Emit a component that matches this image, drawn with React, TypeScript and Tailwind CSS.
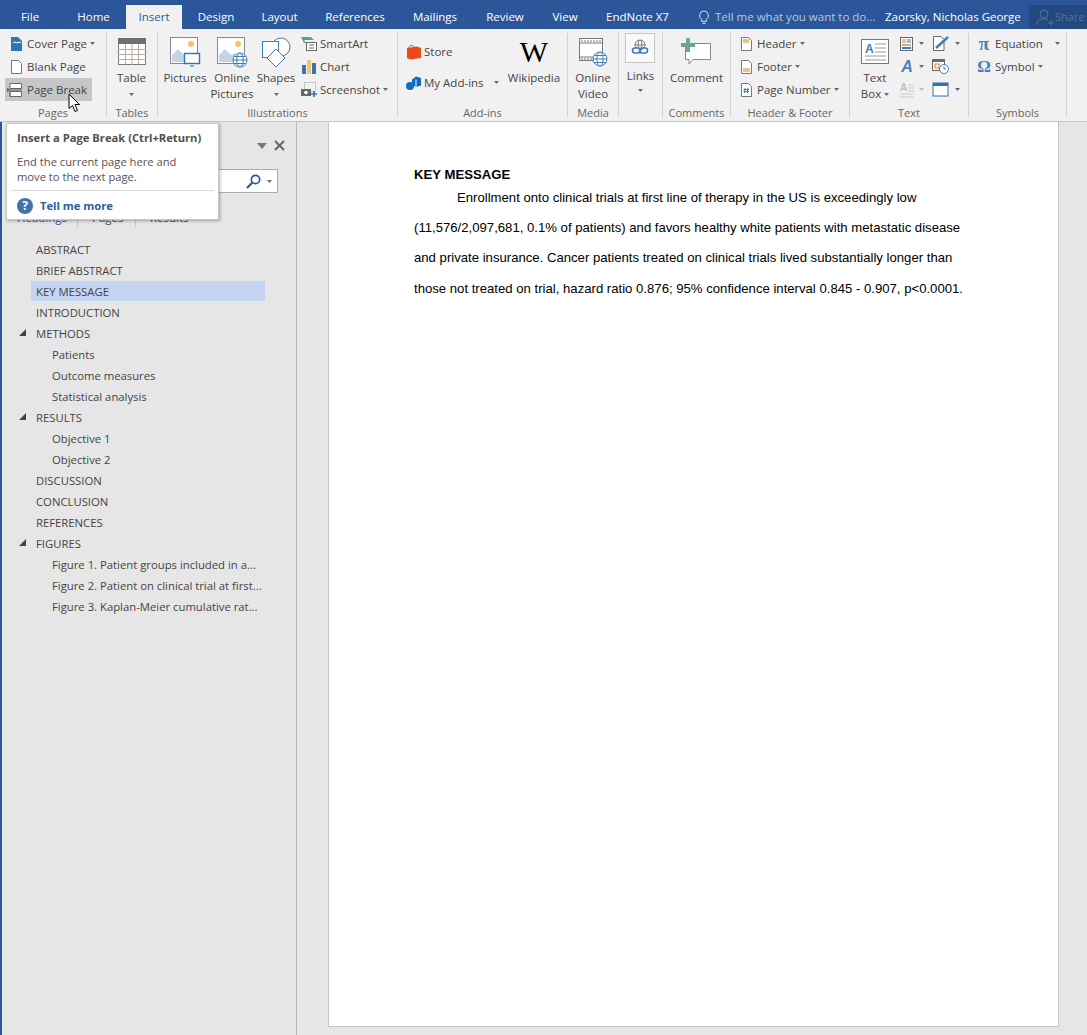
import type { ReactNode } from 'react';

const UI_FONT = "font-['Open_Sans','Noto_Sans',sans-serif]";

const TABS = [
  { label: 'File', className: 'w-[44px] ml-[8px] mr-[12px]' },
  { label: 'Home', className: 'w-[59px]' },
  { label: 'Insert', className: 'w-[56px] ml-[3px] bg-[#f1f1f1] text-[#2b579a]' },
  { label: 'Design', className: 'w-[62px] ml-[3px]' },
  { label: 'Layout', className: 'w-[65px] ml-[0px]' },
  { label: 'References', className: 'w-[86px]' },
  { label: 'Mailings', className: 'w-[74px]' },
  { label: 'Review', className: 'w-[66px]' },
  { label: 'View', className: 'w-[54px]' },
  { label: 'EndNote X7', className: 'w-[91px]' },
];

const TREE = [
  { label: 'ABSTRACT', level: 1 },
  { label: 'BRIEF ABSTRACT', level: 1 },
  { label: 'KEY MESSAGE', level: 1, active: true },
  { label: 'INTRODUCTION', level: 1 },
  { label: 'METHODS', level: 1, open: true },
  { label: 'Patients', level: 2 },
  { label: 'Outcome measures', level: 2 },
  { label: 'Statistical analysis', level: 2 },
  { label: 'RESULTS', level: 1, open: true },
  { label: 'Objective 1', level: 2 },
  { label: 'Objective 2', level: 2 },
  { label: 'DISCUSSION', level: 1 },
  { label: 'CONCLUSION', level: 1 },
  { label: 'REFERENCES', level: 1 },
  { label: 'FIGURES', level: 1, open: true },
  { label: 'Figure 1. Patient groups included in a...', level: 2 },
  { label: 'Figure 2. Patient on clinical trial at first...', level: 2 },
  { label: 'Figure 3. Kaplan-Meier cumulative rat...', level: 2 },
];

const BODY_LINES = [
  '(11,576/2,097,681, 0.1% of patients) and favors healthy white patients with metastatic disease',
  'and private insurance. Cancer patients treated on clinical trials lived substantially longer than',
  'those not treated on trial, hazard ratio 0.876; 95% confidence interval 0.845 - 0.907, p<0.0001.',
];

function Icon({ w, h, children }: { w: number; h: number; children: ReactNode }) {
  return (
    <svg width={w} height={h} viewBox={`0 0 ${w} ${h}`} fill="none" className="block shrink-0">
      {children}
    </svg>
  );
}

function Caret({ color = '#6a6a6a' }: { color?: string }) {
  return (
    <svg width="5" height="3" viewBox="0 0 5 3" className="block shrink-0">
      <path d="M0 0H5L2.5 3Z" fill={color} />
    </svg>
  );
}

function Group({ label, className, children }: { label: string; className: string; children: ReactNode }) {
  return (
    <div className={`flex h-[84px] shrink-0 flex-col border-r border-[#d2d2d2] ${className}`}>
      <div className="flex h-[76px] items-start">{children}</div>
      <div className="h-[8px] text-center text-[11px] leading-[8px] text-[#666]">{label}</div>
    </div>
  );
}

function SmallButton({ icon, label, caret, className = '' }: { icon: ReactNode; label: string; caret?: boolean; className?: string }) {
  return (
    <div className={`flex h-[23px] items-center whitespace-nowrap ${className}`}>
      {icon}
      <span className="ml-[3px]">{label}</span>
      {caret && <span className="ml-[3px]"><Caret /></span>}
    </div>
  );
}

function LargeButton({ icon, lines, caret, className = '' }: { icon: ReactNode; lines: string[]; caret?: boolean; className?: string }) {
  return (
    <div className={`flex shrink-0 flex-col items-center ${className}`}>
      <div className="flex h-[37px] items-center justify-center">{icon}</div>
      {lines.map((line) => (
        <div key={line} className="h-[16px] whitespace-nowrap leading-[16px]">{line}</div>
      ))}
      {caret && <div className="mt-[7px]"><Caret /></div>}
    </div>
  );
}

function PictureFrame({ children }: { children: ReactNode }) {
  return (
    <Icon w={32} h={32}>
      <rect x="1.5" y="1.5" width="27" height="26" fill="#fff" stroke="#8a8a8a" />
      <circle cx="22" cy="8" r="3" fill="#f0c36d" />
      <path d="M3 26V19L9 13L15 19L18 17L24 26Z" fill="#c5d5e8" />
      {children}
    </Icon>
  );
}

function Globe({ x, y, r }: { x: number; y: number; r: number }) {
  return (
    <g stroke="#3f7cb8" fill="#fff" strokeWidth="1">
      <circle cx={x} cy={y} r={r} />
      <ellipse cx={x} cy={y} rx={r * 0.45} ry={r} />
      <path d={`M${x - r} ${y}H${x + r}M${x - r + 1} ${y - r * 0.5}H${x + r - 1}M${x - r + 1} ${y + r * 0.5}H${x + r - 1}`} />
    </g>
  );
}

function PageOutline({ children }: { children?: ReactNode }) {
  return (
    <Icon w={13} h={16}>
      <path d="M1.5 1.5H8.5L11.5 4.5V14.5H1.5Z" fill="#fff" stroke="#777" />
      {children}
    </Icon>
  );
}

function Tree() {
  return (
    <div className="mt-[11px] flex flex-col text-[11.3px]">
      {TREE.map((item) => (
        <div key={item.label} className="relative h-[21px] pl-[29px] pr-[31px] text-[#444]">
          {item.open && (
            <svg width="7" height="7" viewBox="0 0 7 7" className="absolute left-[17px] top-[6px]">
              <path d="M7 0V7H0Z" fill="#444" />
            </svg>
          )}
          <div className={`h-[20px] whitespace-nowrap leading-[21px] ${item.level === 2 ? 'pl-[21px]' : 'pl-[5px]'} ${item.active ? 'bg-[#c3d5f2]' : ''}`}>
            {item.label}
          </div>
        </div>
      ))}
    </div>
  );
}

export default function App() {
  return (
    <div className={`relative flex h-[1035px] w-[1087px] flex-col overflow-hidden bg-[#e6e6e6] text-[11.5px] ${UI_FONT}`}>
      <header className="flex h-[29px] shrink-0 items-end bg-[#2b579a] text-white">
        {TABS.map((tab) => (
          <div key={tab.label} className={`h-[24px] shrink-0 text-center leading-[24px] ${tab.className}`}>
            {tab.label}
          </div>
        ))}
        <div className="ml-[15px] flex h-[24px] shrink-0 items-center text-[#b6c8e3]">
          <Icon w={12} h={15}>
            <path d="M6 1A4.5 4.5 0 0 0 3.8 9.4V11.5H8.2V9.4A4.5 4.5 0 0 0 6 1ZM4.5 13.5H7.5" stroke="#d5e0f0" strokeWidth="1" />
          </Icon>
          <span className="ml-[5px] w-[170px] whitespace-nowrap">Tell me what you want to do...</span>
        </div>
        <div className="h-[24px] w-[144px] shrink-0 whitespace-nowrap leading-[24px]">Zaorsky, Nicholas George</div>
        <div className="flex h-[24px] flex-1 items-center bg-[#24497f] pl-[6px] text-[#4f74a8]">
          <Icon w={20} h={18}>
            <circle cx="9" cy="6" r="4" stroke="#4f74a8" />
            <path d="M2 17C2 12 5 11 9 11C11 11 12 11.5 13 12M13 15H19M16 12V18" stroke="#4f74a8" />
          </Icon>
          <span className="text-[11px]">Share</span>
        </div>
      </header>

      <section className="flex h-[93px] shrink-0 border-b border-[#c6c6c6] bg-[#f1f1f1] pt-[4px] text-[#444]">
        <Group label="Pages" className="w-[107px]">
          <div className="-mt-px flex flex-col pl-[5px]">
            <SmallButton
              className="pl-[5px]"
              caret
              label="Cover Page"
              icon={
                <Icon w={14} h={16}>
                  <path d="M1 1H8L12 5V15H1Z" fill="#2f74b5" />
                  <path d="M3 7L5 6L7 7L9 6L11 7" stroke="#fff" />
                </Icon>
              }
            />
            <SmallButton
              className="pl-[5px]"
              label="Blank Page"
              icon={<div className="w-[14px]"><PageOutline /></div>}
            />
            <SmallButton
              className="w-[87px] bg-[#c6c6c6] pl-[2px]"
              label="Page Break"
              icon={
                <Icon w={17} h={16}>
                  <path d="M3 1.5H14.5V6.5H3M3 9.5H14.5V14.5H3Z" stroke="#666" fill="#fff" />
                  <path d="M3 6.5V1.5M3 9.5V14.5" stroke="#666" />
                  <path d="M0 5.5L3.5 8L0 10.5Z" fill="#2f74b5" />
                  <path d="M3 8H15" stroke="#666" />
                </Icon>
              }
            />
          </div>
        </Group>

        <Group label="Tables" className="w-[51px]">
          <LargeButton
            className="w-[49px]"
            lines={['Table']}
            caret
            icon={
              <Icon w={28} h={28}>
                <rect x="0.5" y="0.5" width="27" height="26" fill="#fff" stroke="#777" />
                <rect x="0" y="0" width="28" height="6" fill="#6e6e6e" />
                <path d="M0 11.5H28M0 16.5H28M0 21.5H28M7.5 6V27M14 6V27M20.5 6V27" stroke="#b5a9a2" />
              </Icon>
            }
          />
        </Group>

        <Group label="Illustrations" className="w-[240px]">
          <LargeButton
            className="ml-[2px] w-[50px]"
            lines={['Pictures']}
            icon={
              <PictureFrame>
                <rect x="15.5" y="17.5" width="15" height="10" fill="#fff" stroke="#2f74b5" strokeWidth="1.4" />
                <path d="M21 30H25" stroke="#2f74b5" />
              </PictureFrame>
            }
          />
          <LargeButton
            className="w-[44px]"
            lines={['Online', 'Pictures']}
            icon={
              <PictureFrame>
                <Globe x={24} y={24} r={7} />
              </PictureFrame>
            }
          />
          <LargeButton
            className="w-[44px]"
            lines={['Shapes']}
            caret
            icon={
              <Icon w={32} h={32}>
                <circle cx="21" cy="11" r="9" fill="#fff" stroke="#3f7cb8" />
                <rect x="2.5" y="5.5" width="16" height="16" fill="#fff" stroke="#3f7cb8" />
                <path d="M16 13L25 22L16 31L7 22Z" fill="#fff" stroke="#3f7cb8" />
              </Icon>
            }
          />
          <div className="-mt-px ml-[3px] flex flex-col">
            <SmallButton
              label="SmartArt"
              icon={
                <Icon w={16} h={16}>
                  <path d="M0 1H10L13 4H3L5 7H3Z" fill="#5e9e8e" />
                  <rect x="5.5" y="6.5" width="10" height="8" fill="#fff" stroke="#666" />
                  <path d="M8 9H13M8 12H13" stroke="#666" />
                </Icon>
              }
            />
            <SmallButton
              label="Chart"
              icon={
                <Icon w={16} h={16}>
                  <rect x="1" y="6" width="4" height="9" fill="#3f74a8" />
                  <rect x="6" y="1" width="4" height="14" fill="#edc47e" />
                  <rect x="11" y="4" width="4" height="11" fill="#3f74a8" />
                </Icon>
              }
            />
            <SmallButton
              label="Screenshot"
              caret
              icon={
                <Icon w={16} h={16}>
                  <rect x="3.5" y="0.5" width="11" height="9" stroke="#999" strokeDasharray="1 1" />
                  <rect x="0" y="7" width="10" height="7" fill="#666" />
                  <circle cx="5" cy="10.5" r="1.8" fill="#fff" />
                  <path d="M13 9V15M10 12H16" stroke="#2f74b5" strokeWidth="1.6" />
                </Icon>
              }
            />
          </div>
        </Group>

        <Group label="Add-ins" className="w-[170px]">
          <div className="flex w-[108px] shrink-0 flex-col pl-[8px] pt-[3px]">
            <div className="flex h-[31px] items-center">
              <Icon w={15} h={16}>
                <path d="M1 4L11 2.5L15 4V14L4 15.5L1 14Z" fill="#ea4a1b" />
                <path d="M3 4C3 1 7 0 7.5 3" stroke="#ea4a1b" />
              </Icon>
              <span className="ml-[3px]">Store</span>
            </div>
            <div className="flex h-[31px] items-center">
              <Icon w={15} h={16}>
                <path d="M6 4.5L10 1.5L15 3V10.5L10 12L6 10Z" fill="#0f6cbd" />
                <circle cx="4" cy="11" r="4" fill="#0f6cbd" />
                <path d="M10 4.5V12" stroke="#f1f1f1" />
              </Icon>
              <span className="ml-[3px]">My Add-ins</span>
              <span className="ml-[10px]"><Caret /></span>
            </div>
          </div>
          <div className="flex w-[56px] shrink-0 flex-col items-center">
            <div className="flex h-[37px] items-center font-['Liberation_Serif',serif] text-[30px] leading-none text-black">W</div>
            <div className="h-[16px] leading-[16px]">Wikipedia</div>
          </div>
        </Group>

        <Group label="Media" className="w-[51px]">
          <LargeButton
            className="w-[50px]"
            lines={['Online', 'Video']}
            icon={
              <Icon w={30} h={30}>
                <rect x="1.5" y="1.5" width="23" height="22" fill="#fff" stroke="#777" />
                <path d="M1 6H25M1 20H25" stroke="#777" />
                <path d="M3 4H23M3 22H14" stroke="#777" strokeDasharray="2 1" />
                <Globe x={22} y={22} r={7} />
              </Icon>
            }
          />
        </Group>

        <Group label="" className="w-[44px]">
          <div className="flex w-[43px] flex-col items-center">
            <div className="ml-[-1px] flex h-[30px] w-[30px] items-center justify-center border border-[#c6c6c6] bg-[#f9f9f9]">
              <Icon w={18} h={18}>
                <circle cx="9" cy="6" r="5" stroke="#777" />
                <ellipse cx="9" cy="6" rx="2" ry="5" stroke="#777" />
                <path d="M4 6H14" stroke="#777" />
                <rect x="1.5" y="9" width="8" height="5" rx="2.5" fill="#f9f9f9" stroke="#3f7cb8" strokeWidth="1.6" />
                <rect x="8.5" y="9" width="8" height="5" rx="2.5" stroke="#3f7cb8" strokeWidth="1.6" />
              </Icon>
            </div>
            <div className="mt-[5px] h-[16px] leading-[16px]">Links</div>
            <div className="mt-[5px]"><Caret /></div>
          </div>
        </Group>

        <Group label="Comments" className="w-[68px]">
          <LargeButton
            className="w-[67px]"
            lines={['Comment']}
            icon={
              <Icon w={32} h={30}>
                <path d="M4.5 6.5H29.5V22.5H12L8 27V22.5H4.5Z" fill="#fff" stroke="#888" />
                <path d="M0 6H5V1H9V6H14V10H9V15H5V10H0Z" fill="#6aa595" />
              </Icon>
            }
          />
        </Group>

        <Group label="Header & Footer" className="w-[119px]">
          <div className="-mt-px flex flex-col pl-[9px]">
            <SmallButton
              caret
              label="Header"
              icon={
                <div className="w-[14px]"><PageOutline><rect x="3" y="3" width="6" height="4" fill="#edc47e" /></PageOutline></div>
              }
            />
            <SmallButton
              caret
              label="Footer"
              icon={
                <div className="w-[14px]"><PageOutline><rect x="3" y="9" width="7" height="4" fill="#edc47e" /></PageOutline></div>
              }
            />
            <SmallButton
              caret
              label="Page Number"
              icon={
                <div className="w-[14px]"><PageOutline><path d="M5 6L4.5 11M8 6L7.5 11M3.5 7.5H9M3.5 9.5H9" stroke="#3f7cb8" /></PageOutline></div>
              }
            />
          </div>
        </Group>

        <Group label="Text" className="w-[119px]">
          <div className="flex w-[50px] shrink-0 flex-col items-center">
            <div className="flex h-[37px] items-center justify-center">
              <Icon w={28} h={26}>
                <rect x="0.5" y="0.5" width="27" height="24" fill="#fff" stroke="#777" />
                <text x="4" y="14" fill="#3f7cb8" fontSize="12" fontFamily="Liberation Sans" fontWeight="700">A</text>
                <path d="M14 5H25M14 9H25M14 13H25M4 17H25M4 21H25" stroke="#999" />
              </Icon>
            </div>
            <div className="h-[16px] leading-[16px]">Text</div>
            <div className="flex h-[16px] items-center gap-[3px] leading-[16px]">Box <Caret /></div>
          </div>
          <div className="-mt-px flex w-[32px] shrink-0 flex-col">
            <div className="flex h-[23px] items-center gap-[5px]">
              <Icon w={14} h={16}>
                <rect x="0.5" y="1.5" width="12" height="13" fill="#fff" stroke="#666" />
                <rect x="2" y="3" width="4" height="4" fill="#edc47e" />
                <path d="M7 4H11M7 6H11M2 9H11" stroke="#666" />
                <rect x="2" y="11" width="9" height="2" fill="#3f7cb8" />
              </Icon>
              <Caret />
            </div>
            <div className="flex h-[23px] items-center gap-[5px]">
              <div className="w-[14px] text-center font-['Liberation_Sans',sans-serif] text-[16px] font-bold italic leading-none text-[#4a80b9]">A</div>
              <Caret />
            </div>
            <div className="flex h-[23px] items-center gap-[5px]">
              <Icon w={14} h={16}>
                <text x="0" y="9" fill="#bdbdbd" fontSize="10" fontFamily="Liberation Sans" fontWeight="700">A</text>
                <path d="M8 3H14M8 6H14M8 9H14M0 12H14M0 15H14" stroke="#c8c8c8" />
              </Icon>
              <Caret color="#bdbdbd" />
            </div>
          </div>
          <div className="-mt-px flex shrink-0 flex-col">
            <div className="flex h-[23px] items-center gap-[5px]">
              <Icon w={18} h={17}>
                <path d="M1.5 1.5H9L12 4.5V15.5H1.5Z" fill="#fff" stroke="#666" />
                <path d="M4 13L16 2" stroke="#3f7cb8" strokeWidth="2.4" />
              </Icon>
              <Caret />
            </div>
            <div className="flex h-[23px] items-center gap-[5px]">
              <Icon w={18} h={17}>
                <rect x="0.5" y="1.5" width="12" height="11" fill="#fff" stroke="#666" />
                <rect x="0" y="1" width="13" height="3" fill="#6a6a6a" />
                <rect x="3" y="6" width="4" height="4" stroke="#e3791f" />
                <circle cx="12" cy="11" r="4.5" fill="#fff" stroke="#3f7cb8" />
                <path d="M12 8.5V11H14" stroke="#3f7cb8" />
              </Icon>
            </div>
            <div className="flex h-[23px] items-center gap-[5px]">
              <Icon w={18} h={17}>
                <rect x="1" y="2" width="15" height="13" fill="#fff" stroke="#2f74b5" />
                <rect x="1" y="2" width="15" height="3" fill="#2f74b5" />
              </Icon>
              <Caret />
            </div>
          </div>
        </Group>

        <Group label="Symbols" className="w-[98px]">
          <div className="-mt-px flex flex-col pl-[8px]">
            <div className="flex h-[23px] items-center">
              <span className="w-[14px] text-center font-['Liberation_Serif',serif] text-[19px] font-bold leading-none text-[#4a80b9]">π</span>
              <span className="ml-[4px] w-[60px]">Equation</span>
              <Caret />
            </div>
            <div className="flex h-[23px] items-center">
              <span className="w-[14px] text-center font-['Liberation_Serif',serif] text-[17px] font-bold leading-none text-[#4a80b9]">Ω</span>
              <span className="ml-[4px]">Symbol</span>
              <span className="ml-[3px]"><Caret /></span>
            </div>
          </div>
        </Group>
      </section>

      <div className="flex min-h-0 flex-1">
        <aside className="w-[297px] shrink-0 border-l-[2px] border-r border-l-[#2b579a] border-r-[#b9b9b9]">
          <div className="flex h-[47px] items-center justify-end pr-[11px]">
            <span className="mr-[7px]"><svg width="10" height="6" viewBox="0 0 10 6" className="block"><path d="M0 0H10L5 6Z" fill="#777" /></svg></span>
            <svg width="11" height="11" viewBox="0 0 11 11" className="block"><path d="M1 1L10 10M10 1L1 10" stroke="#666" strokeWidth="2" /></svg>
          </div>
          <div className="ml-[8px] flex h-[24px] w-[268px] items-center justify-end border border-[#ababab] bg-white pr-[5px]">
            <svg width="15" height="15" viewBox="0 0 15 15" className="mr-[6px] block">
              <circle cx="9.5" cy="5.5" r="4.2" fill="none" stroke="#2b579a" strokeWidth="1.7" />
              <path d="M6.2 8.8L1 14" stroke="#2b579a" strokeWidth="2.2" />
            </svg>
            <Caret />
          </div>
          <div className="mt-[15px] flex h-[20px] items-center text-[#444]">
            <span className="ml-[15px] w-[61px] border-r border-[#c6c6c6] text-[#2b579a]">Headings</span>
            <span className="ml-[14px] w-[44px] border-r border-[#c6c6c6]">Pages</span>
            <span className="ml-[14px]">Results</span>
          </div>
          <Tree />
        </aside>

        <main className="min-w-0 flex-1 pl-[31px]">
          <article className="h-[905px] w-[731px] border-x border-b border-[#c6c6c6] bg-white pl-[85px] pt-[43px] font-['Liberation_Sans',sans-serif] text-[13.15px] text-black">
            <h1 className="h-[17.5px] text-[13.15px] font-bold leading-[19px]">KEY MESSAGE</h1>
            <p className="whitespace-nowrap pl-[43px] leading-[30.4px]">Enrollment onto clinical trials at first line of therapy in the US is exceedingly low</p>
            {BODY_LINES.map((line) => (
              <p key={line} className="whitespace-nowrap leading-[30.4px]">{line}</p>
            ))}
          </article>
        </main>
      </div>

      <div className="absolute left-[6px] top-[123px] h-[97px] w-[213px] border border-[#c6c6c6] bg-white px-[10px] pt-[5px] text-[11.2px] shadow-[1px_1px_3px_rgba(0,0,0,0.3)]">
        <div className="h-[18px] whitespace-nowrap font-bold leading-[18px] text-[#505050]">Insert a Page Break (Ctrl+Return)</div>
        <div className="mt-[7px] leading-[15px] text-[#5f5050]">
          <div className="whitespace-nowrap">End the current page here and</div>
          <div className="whitespace-nowrap">move to the next page.</div>
        </div>
        <div className="ml-[-6px] mr-[-6px] mt-[6px] border-t border-[#dcdcdc]" />
        <div className="mt-[7px] flex items-center font-bold text-[#2b5f9e]">
          <span className="flex h-[16px] w-[16px] items-center justify-center rounded-full bg-[#3f74a8] text-[12px] leading-none text-white">?</span>
          <span className="ml-[7px]">Tell me more</span>
        </div>
      </div>

      <svg width="14" height="20" viewBox="0 0 14 20" className="absolute left-[68px] top-[93px]">
        <path d="M1 1V15.5L4.5 12.5L7 18.5L9.5 17.5L7 11.5H11.5Z" fill="#fff" stroke="#000" />
      </svg>
    </div>
  );
}
